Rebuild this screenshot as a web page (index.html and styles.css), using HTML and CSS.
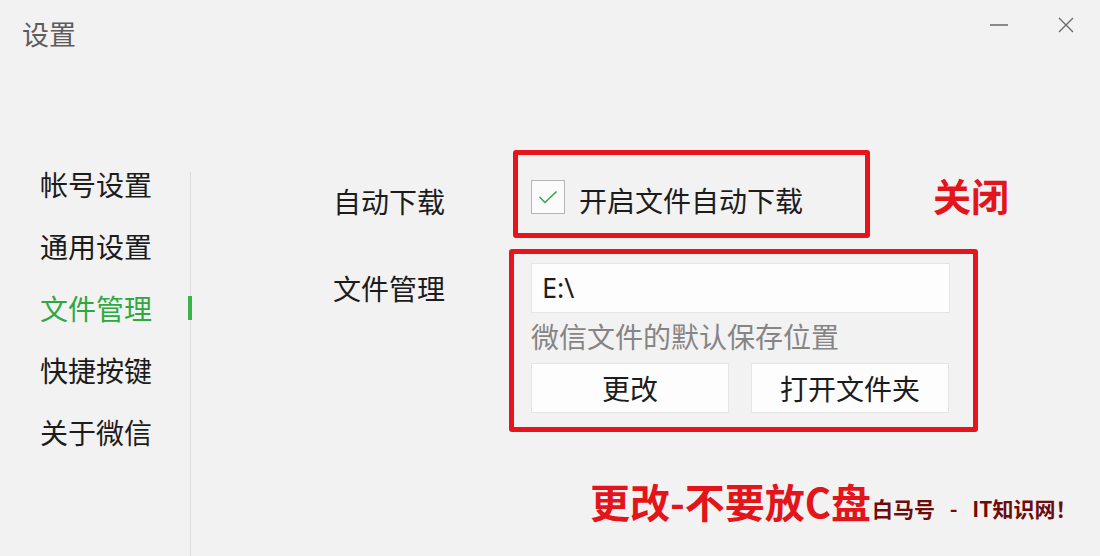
FILE: index.html
```html
<!DOCTYPE html>
<html lang="zh-CN">
<head>
    <meta charset="UTF-8">
    <meta name="viewport" content="width=device-width, initial-scale=1.0">
    <title>设置</title>
    <link rel="stylesheet" href="styles.css">
</head>
<body>
    <div class="window">
        <header class="titlebar">
            <h1 class="title">设置</h1>
            <div class="controls">
                <span class="ctrl minimize">
                    <svg width="18" height="4" viewBox="0 0 18 4"><line x1="0" y1="2" x2="18" y2="2" stroke="#8a8a8a" stroke-width="2"/></svg>
                </span>
                <span class="ctrl close">
                    <svg width="16" height="16" viewBox="0 0 16 16"><path d="M1 1 L15 15 M15 1 L1 15" stroke="#6a6a6a" stroke-width="1.4" fill="none"/></svg>
                </span>
            </div>
        </header>

        <div class="body">
            <aside class="sidebar">
                <ul class="nav">
                    <li>帐号设置</li>
                    <li>通用设置</li>
                    <li class="active">文件管理</li>
                    <li>快捷按键</li>
                    <li>关于微信</li>
                </ul>
                <div class="divider"></div>
            </aside>

            <main class="content">
                <div class="row">
                    <div class="label label-first">自动下载</div>
                    <div class="mark mark-download">
                        <span class="checkbox">
                            <svg width="20" height="14" viewBox="0 0 20 14"><path d="M1.5 7 L7 12.5 L18.5 1.5" stroke="#3aa64a" stroke-width="1.6" fill="none"/></svg>
                        </span>
                        <span class="check-text">开启文件自动下载</span>
                    </div>
                    <div class="note note-close">关闭</div>
                </div>

                <div class="row row-files">
                    <div class="label label-second">文件管理</div>
                    <div class="mark mark-files">
                        <div class="path-input">E:\</div>
                        <div class="hint">微信文件的默认保存位置</div>
                        <div class="buttons">
                            <button class="btn">更改</button>
                            <button class="btn">打开文件夹</button>
                        </div>
                    </div>
                </div>

                <div class="footnote">
                    <span class="note note-bottom">更改-不要放C盘</span>
                    <span class="watermark">白马号 - IT知识网！</span>
                </div>
            </main>
        </div>
    </div>
</body>
</html>
```

FILE: styles.css
```css
* {
    margin: 0;
    padding: 0;
    box-sizing: border-box;
}

body {
    font-family: "Noto Sans CJK SC", "Noto Sans", sans-serif;
    color: #1c1c1c;
    background-color: #f3f2f2;
}

.window {
    width: 1100px;
    height: 556px;
    overflow: hidden;
    display: flex;
    flex-direction: column;
}

/* title bar */
.titlebar {
    height: 150px;
    display: flex;
    justify-content: space-between;
    align-items: flex-start;
}

.title {
    font-size: 27px;
    font-weight: 400;
    line-height: 27px;
    color: #5c5c5c;
    padding: 20px 0 0 22px;
}

.controls {
    display: flex;
    align-items: center;
    padding: 17px 26px 0 0;
}

.ctrl {
    display: flex;
    align-items: center;
    justify-content: center;
}

.minimize {
    margin-right: 50px;
    margin-top: -1px;
}

/* body */
.body {
    flex: 1;
    display: flex;
}

.sidebar {
    width: 191px;
    display: flex;
}

.nav {
    list-style: none;
    width: 190px;
    padding: 3px 0 0 40px;
}

.nav li {
    position: relative;
    height: 62px;
    line-height: 62px;
    font-size: 28px;
}

.nav li.active {
    color: #2fa83f;
}

.nav li.active::after {
    content: "";
    position: absolute;
    right: -2px;
    top: 19px;
    width: 4px;
    height: 24px;
    background-color: #3bb54a;
}

.divider {
    width: 1px;
    margin-top: 22px;
    background-color: #dcdcdc;
}

.content {
    flex: 1;
    padding-left: 142px;
}

.row {
    display: flex;
    align-items: flex-start;
}

.row-files {
    margin-top: 11px;
}

.label {
    width: 176px;
    font-size: 28px;
    line-height: 28px;
}

.label-first {
    margin-top: 37px;
}

.label-second {
    margin-top: 25px;
}

/* red annotation boxes */
.mark {
    border: 5px solid #e8141c;
    border-radius: 3px;
}

.mark-download {
    margin-left: 4px;
    width: 357px;
    height: 88px;
    display: flex;
    align-items: center;
    padding: 5px 13px 0;
}

.checkbox {
    width: 34px;
    height: 34px;
    border: 1px solid #b4b4b4;
    background-color: #fbfbfb;
    display: flex;
    align-items: center;
    justify-content: center;
}

.check-text {
    font-size: 28px;
    line-height: 28px;
    margin-left: 14px;
    padding-top: 6px;
}

.note {
    color: #e4141b;
    font-weight: 700;
}

.note-close {
    font-size: 38px;
    line-height: 38px;
    margin: 26px 0 0 63px;
}

.mark-files {
    width: 469px;
    height: 183px;
    padding: 9px 23px 0 17px;
}

.path-input {
    height: 50px;
    background-color: #fdfdfd;
    border: 1px solid #e4e4e4;
    font-family: "Noto Sans", "Noto Sans CJK SC", sans-serif;
    font-size: 27px;
    line-height: 48px;
    padding-left: 10px;
}

.hint {
    margin-top: 5px;
    font-size: 28px;
    line-height: 36px;
    color: #858585;
}

.buttons {
    margin-top: 9px;
    display: flex;
    gap: 22px;
}

.btn {
    width: 198px;
    height: 50px;
    background-color: #fdfdfd;
    border: 1px solid #e4e4e4;
    font-family: inherit;
    font-size: 28px;
    color: #1c1c1c;
}

/* bottom note */
.footnote {
    margin: 47px 0 0 257px;
    display: flex;
    align-items: flex-end;
    white-space: nowrap;
}

.note-bottom {
    font-size: 40px;
    line-height: 44px;
}

.watermark {
    font-size: 21px;
    line-height: 24px;
    font-weight: 700;
    word-spacing: 10px;
    color: #6e0b0b;
    margin-left: 1px;
    margin-bottom: 3px;
}
```
